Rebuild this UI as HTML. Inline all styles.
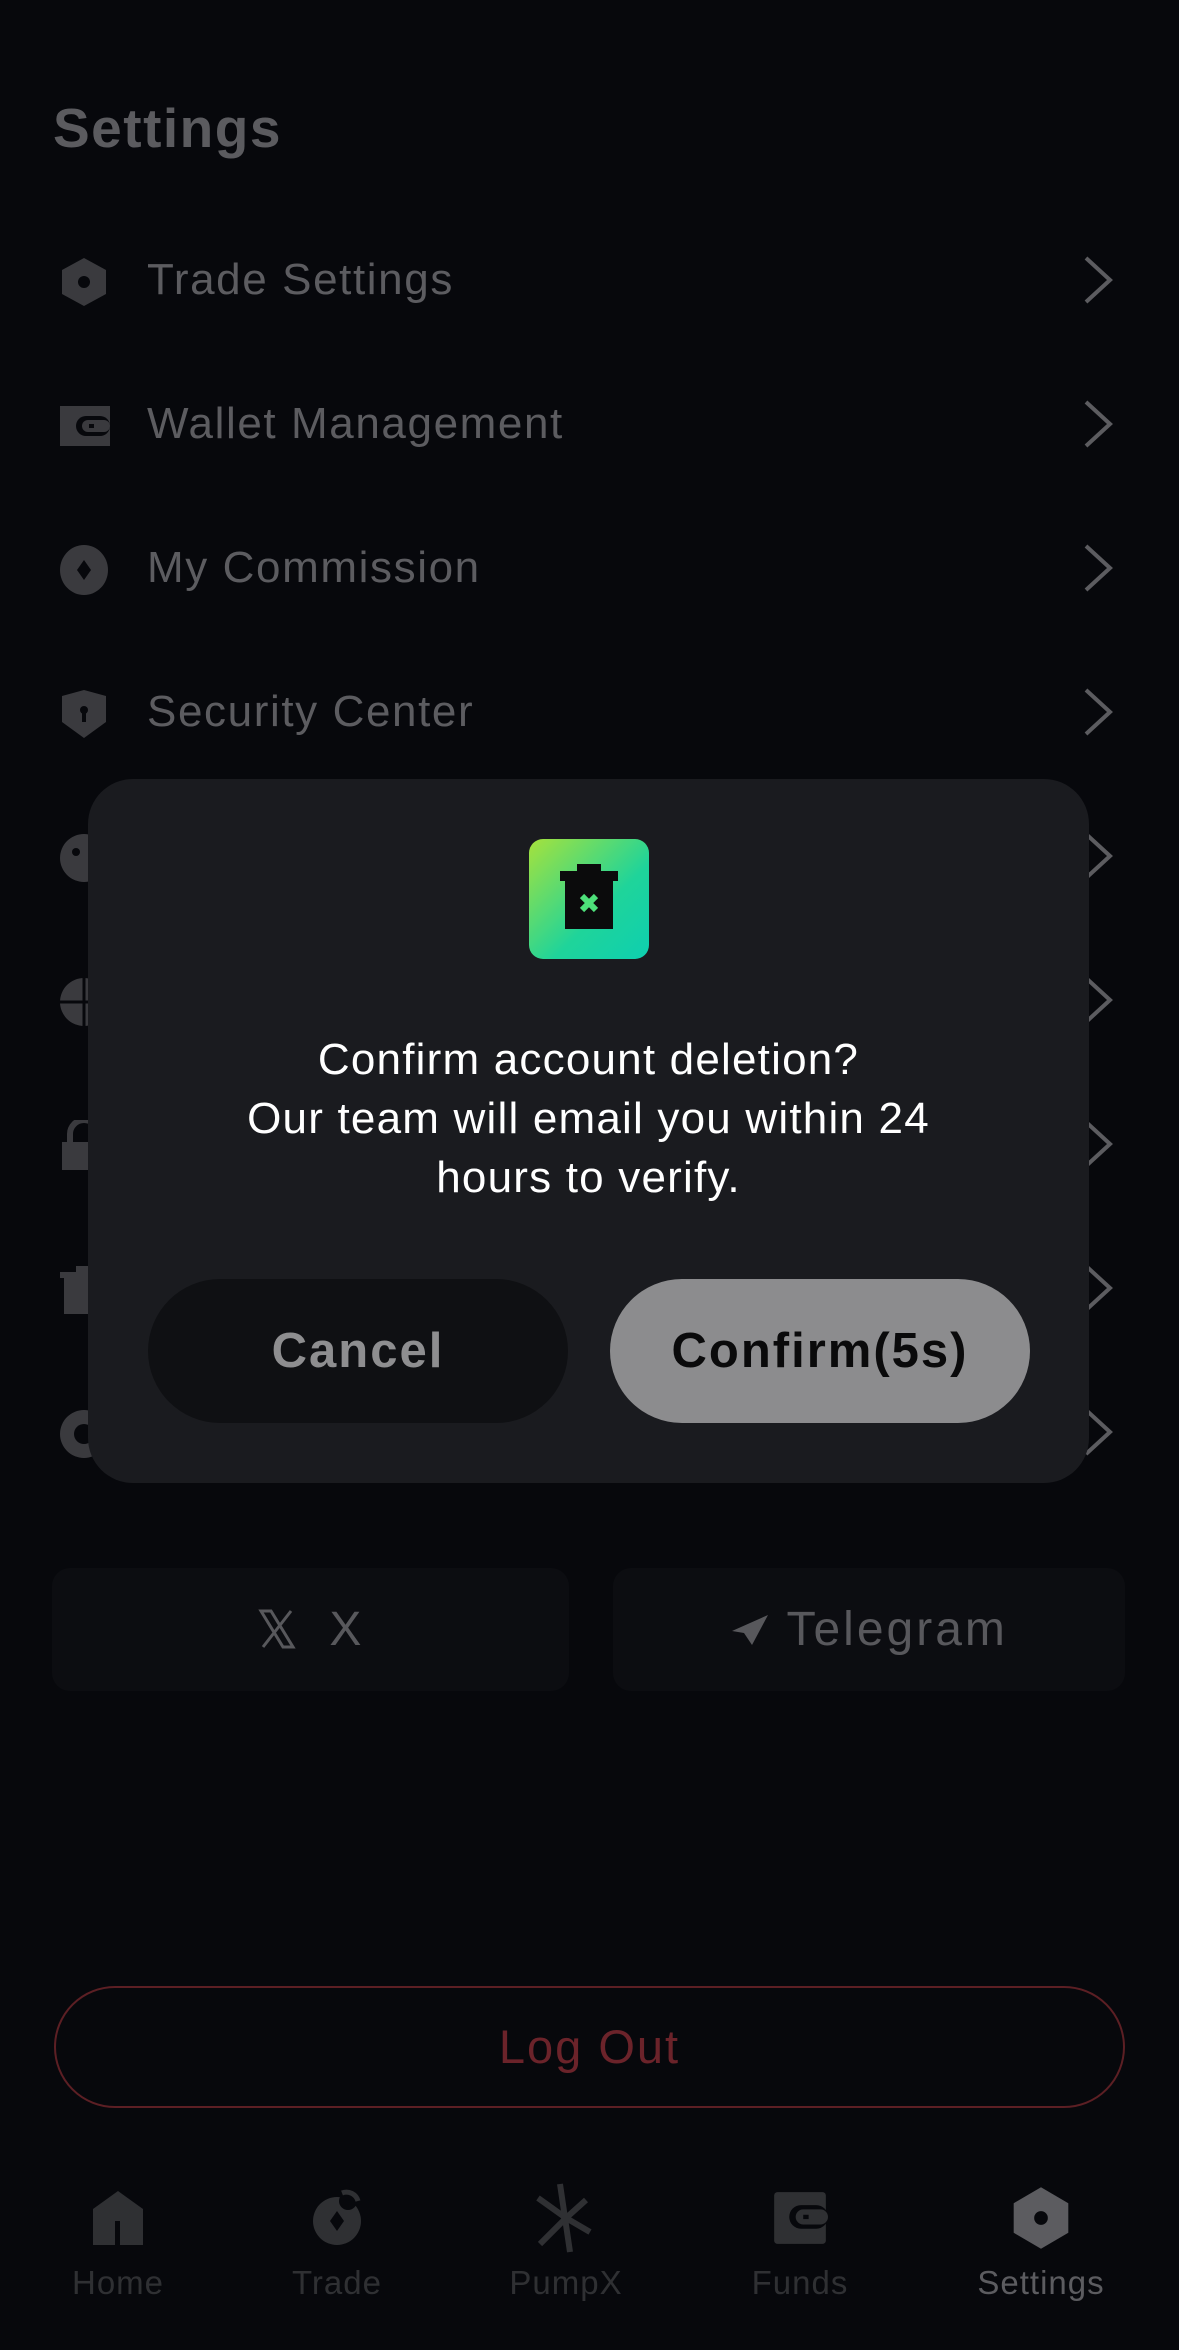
<!DOCTYPE html>
<html><head><meta charset="utf-8"><style>
*{margin:0;padding:0;box-sizing:border-box}
body{width:1179px;height:2350px;background:#07080c;font-family:"Liberation Sans",sans-serif;position:relative;overflow:hidden}
.abs{position:absolute}
.title{left:53px;top:94px;font-size:55px;font-weight:bold;color:#5b5b5f;line-height:68px;letter-spacing:1.5px}
.row{position:absolute;left:0;width:1179px;height:80px}
.row .ic{position:absolute;left:58px;top:16px;width:52px;height:52px}
.row .t{position:absolute;left:147px;top:15px;font-size:44px;color:#5c5c60;line-height:50px;letter-spacing:1.6px}
.row .ch{position:absolute;left:1080px;top:14px}
.modal{left:88px;top:779px;width:1001px;height:704px;background:#1a1b1f;border-radius:45px}
.ticon{left:441px;top:60px;width:120px;height:120px;border-radius:14px;background:linear-gradient(135deg,#a6e23c,#1fd49a 60%,#0ecfb0)}
.msg{left:0;top:251px;width:1001px;text-align:center;color:#fff;font-size:44px;line-height:59px;letter-spacing:1.2px}
.btn{top:500px;width:420px;height:144px;border-radius:72px;font-size:49px;font-weight:bold;text-align:center;line-height:144px;letter-spacing:2px}
.social{top:1568px;height:123px;border-radius:18px;background:#0c0d11;color:#58585c;font-size:48px;text-align:center;line-height:123px;letter-spacing:3px}
.logout{left:54px;top:1986px;width:1071px;height:122px;border:2px solid #5c1f24;border-radius:61px;color:#6b232a;font-size:47px;text-align:center;line-height:118px;letter-spacing:2px}
.tab{top:2180px;width:200px;height:140px;text-align:center;font-size:33px;color:#2f3033;letter-spacing:1px}
.tab .ib{height:76px;display:flex;align-items:center;justify-content:center;margin-bottom:8px}
</style></head><body>
<div class="abs title">Settings</div>

<div class="row" style="top:240px"><svg class="ic" viewBox="0 0 52 52"><path d="M26 2 L48 14 V38 L26 50 L4 38 V14Z" fill="#3a3a3e"/><circle cx="26" cy="26" r="6" fill="#07080c"/></svg><div class="t">Trade Settings</div><svg class="ch" width="36" height="52" viewBox="0 0 36 52"><path d="M6 4 L30 26 L6 48" stroke="#5c5c60" stroke-width="4" fill="none"/></svg></div>
<div class="row" style="top:384px"><svg class="ic" viewBox="0 0 52 52"><rect x="2" y="6" width="50" height="40" fill="#3a3a3e"/><rect x="18" y="16" width="34" height="20" rx="10" fill="#07080c"/><rect x="24" y="20" width="28" height="12" rx="6" fill="#3a3a3e"/><rect x="31" y="24" width="5" height="4" fill="#07080c"/></svg><div class="t">Wallet Management</div><svg class="ch" width="36" height="52" viewBox="0 0 36 52"><path d="M6 4 L30 26 L6 48" stroke="#5c5c60" stroke-width="4" fill="none"/></svg></div>
<div class="row" style="top:528px"><svg class="ic" viewBox="0 0 52 52"><ellipse cx="26" cy="26" rx="24" ry="25" fill="#3a3a3e"/><path d="M26 16 L33 26 L26 36 L19 26Z" fill="#07080c"/></svg><div class="t">My Commission</div><svg class="ch" width="36" height="52" viewBox="0 0 36 52"><path d="M6 4 L30 26 L6 48" stroke="#5c5c60" stroke-width="4" fill="none"/></svg></div>
<div class="row" style="top:672px"><svg class="ic" viewBox="0 0 52 52"><path d="M26 2 L48 8 V34 L26 50 L4 34 V8Z" fill="#3a3a3e"/><circle cx="26" cy="22" r="4" fill="#07080c"/><rect x="24" y="22" width="4" height="12" fill="#07080c"/></svg><div class="t">Security Center</div><svg class="ch" width="36" height="52" viewBox="0 0 36 52"><path d="M6 4 L30 26 L6 48" stroke="#5c5c60" stroke-width="4" fill="none"/></svg></div>
<div class="row" style="top:816px"><svg class="ic" viewBox="0 0 52 52"><circle cx="26" cy="26" r="24" fill="#3a3a3e"/><circle cx="18" cy="20" r="4" fill="#07080c"/></svg><svg class="ch" width="36" height="52" viewBox="0 0 36 52"><path d="M6 4 L30 26 L6 48" stroke="#5c5c60" stroke-width="4" fill="none"/></svg></div>
<div class="row" style="top:960px"><svg class="ic" viewBox="0 0 52 52"><circle cx="26" cy="26" r="24" fill="#3a3a3e"/><path d="M2 26H50M26 2V50" stroke="#07080c" stroke-width="3"/></svg><svg class="ch" width="36" height="52" viewBox="0 0 36 52"><path d="M6 4 L30 26 L6 48" stroke="#5c5c60" stroke-width="4" fill="none"/></svg></div>
<div class="row" style="top:1104px"><svg class="ic" viewBox="0 0 52 52"><rect x="4" y="22" width="44" height="28" fill="#3a3a3e"/><path d="M12 22 V14 a14 14 0 0 1 28 0 V22" stroke="#3a3a3e" stroke-width="6" fill="none"/></svg><svg class="ch" width="36" height="52" viewBox="0 0 36 52"><path d="M6 4 L30 26 L6 48" stroke="#5c5c60" stroke-width="4" fill="none"/></svg></div>
<div class="row" style="top:1248px"><svg class="ic" viewBox="0 0 52 52"><rect x="6" y="14" width="40" height="36" fill="#3a3a3e"/><rect x="2" y="8" width="48" height="6" fill="#3a3a3e"/><rect x="18" y="2" width="16" height="6" fill="#3a3a3e"/></svg><svg class="ch" width="36" height="52" viewBox="0 0 36 52"><path d="M6 4 L30 26 L6 48" stroke="#5c5c60" stroke-width="4" fill="none"/></svg></div>
<div class="row" style="top:1392px"><svg class="ic" viewBox="0 0 52 52"><circle cx="26" cy="26" r="24" fill="#3a3a3e"/><circle cx="26" cy="26" r="10" fill="#07080c"/></svg><svg class="ch" width="36" height="52" viewBox="0 0 36 52"><path d="M6 4 L30 26 L6 48" stroke="#5c5c60" stroke-width="4" fill="none"/></svg></div>

<div class="abs social" style="left:52px;width:517px"><svg width="40" height="40" viewBox="0 0 40 40" style="vertical-align:-4px"><path d="M4 2 H14 L36 38 H26Z" stroke="#58585c" stroke-width="3" fill="none"/><path d="M34 2 L6 38" stroke="#58585c" stroke-width="3"/></svg>&nbsp;&nbsp;X</div>
<div class="abs social" style="left:613px;width:512px"><svg width="40" height="34" viewBox="0 0 40 34" style="vertical-align:-2px"><path d="M38 2 L2 18 L14 20 L22 32Z" fill="#58585c"/></svg>&nbsp;Telegram</div>

<div class="abs logout">Log Out</div>

<div class="abs tab" style="left:18px"><div class="ib"><svg width="54" height="58" viewBox="0 0 54 58"><path d="M2 20 L27 2 L52 20 V56 H2Z" fill="#2f3033"/><rect x="24" y="32" width="5" height="24" fill="#07080c"/></svg></div>Home</div>
<div class="abs tab" style="left:237px"><div class="ib"><svg width="58" height="62" viewBox="0 0 58 62"><circle cx="29" cy="34" r="24" fill="#2f3033"/><path d="M29 24 L36 34 L29 44 L22 34Z" fill="#07080c"/><circle cx="40" cy="14" r="9" fill="#07080c"/><path d="M34 6 a12 12 0 0 1 16 8" stroke="#2f3033" stroke-width="5" fill="none"/></svg></div>Trade</div>
<div class="abs tab" style="left:466px"><div class="ib"><svg width="60" height="72" viewBox="0 0 60 72"><path d="M24 2 L34 70 M2 16 L30 36 L4 62 M50 18 L30 36 L54 50" stroke="#2f3033" stroke-width="6" fill="none"/></svg></div>PumpX</div>
<div class="abs tab" style="left:700px"><div class="ib"><svg width="56" height="56" viewBox="0 0 52 52"><rect x="2" y="2" width="48" height="48" rx="3" fill="#2f3033"/><rect x="16" y="14" width="36" height="22" rx="11" fill="#07080c"/><rect x="22" y="18" width="30" height="14" rx="7" fill="#2f3033"/><rect x="29" y="23" width="5" height="4" fill="#07080c"/></svg></div>Funds</div>
<div class="abs tab" style="left:941px;color:#5c5c60"><div class="ib"><svg width="60" height="66" viewBox="0 0 52 58"><path d="M26 2 L50 16 V42 L26 56 L2 42 V16Z" fill="#5c5c60"/><circle cx="26" cy="29" r="6" fill="#07080c"/></svg></div>Settings</div>

<div class="abs modal">
 <div class="abs ticon"><svg width="120" height="120" viewBox="0 0 120 120"><rect x="31" y="32" width="58" height="10" fill="#0b0b0c"/><rect x="48" y="25" width="24" height="10" fill="#0b0b0c"/><rect x="36" y="42" width="48" height="48" fill="#0b0b0c"/><path d="M53 57 L67 71 M67 57 L53 71" stroke="#4ee07a" stroke-width="6"/></svg></div>
 <div class="abs msg">Confirm account deletion?<br>Our team will email you within 24<br>hours to verify.</div>
 <div class="abs btn" style="left:60px;background:#0f1013;color:#8e8e90">Cancel</div>
 <div class="abs btn" style="left:522px;background:#8c8c8e;color:#0a0a0b">Confirm(5s)</div>
</div>
</body></html>
